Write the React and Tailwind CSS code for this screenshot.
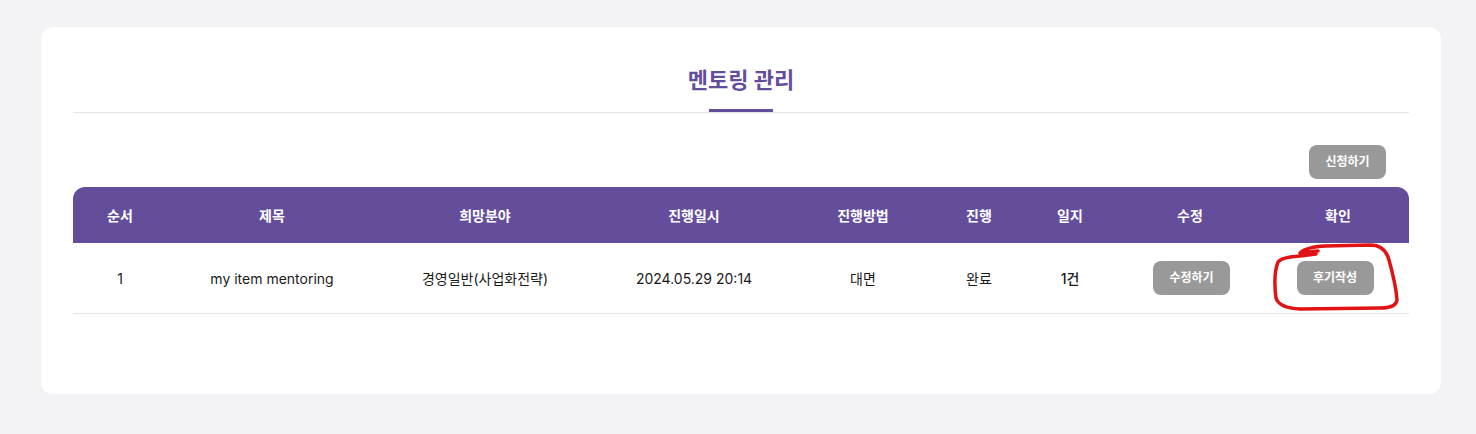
import React from 'react';

const cols = ['순서', '제목', '희망분야', '진행일시', '진행방법', '진행', '일지', '수정', '확인'];

const GrayButton = ({ children }) => (
  <button className="h-[34px] w-[77px] rounded-[8px] bg-[#999999] text-[12px] font-bold text-white">
    {children}
  </button>
);

const App = () => {
  const grid = 'grid grid-cols-[94px_210px_216px_202px_136px_96px_86px_154px_142px]';
  return (
    <div
      className="min-h-[434px] bg-[#f3f3f5] pt-[27px] pb-[39px]"
      style={{ fontFamily: 'Inter, "Noto Sans CJK KR", sans-serif' }}
    >
      <div className="relative ml-[41px] w-[1400px] rounded-[12px] bg-white px-8 pt-[35px] pb-[80px]">
        {/* title */}
        <div className="border-b border-[#e4e4e8] text-center">
          <h2 className="text-[22px] leading-[36px] font-bold text-[#634e9b]">멘토링 관리</h2>
          <div className="mx-auto mt-[11px] h-[3px] w-16 bg-[#634e9b]" />
        </div>

        <div className="mt-8 flex justify-end pr-[23px]">
          <GrayButton>신청하기</GrayButton>
        </div>

        {/* table */}
        <div className="mt-2">
          <div className={`${grid} h-[56px] items-center rounded-t-[12px] bg-[#644e9c] text-[14px] font-bold text-white`}>
            {cols.map((c) => (
              <div key={c} className="text-center">{c}</div>
            ))}
          </div>
          <div className={`${grid} h-[71px] items-center border-b border-[#e2e2e8] text-[14px] text-[#1a1a1a]`}>
            <div className="text-center">1</div>
            <div className="text-center">my item mentoring</div>
            <div className="text-center">경영일반(사업화전략)</div>
            <div className="text-center">2024.05.29 20:14</div>
            <div className="text-center">대면</div>
            <div className="text-center">완료</div>
            <div className="text-center font-medium">1건</div>
            <div className="flex justify-center pl-[3px]"><GrayButton>수정하기</GrayButton></div>
            <div className="flex justify-center pr-[6px]"><GrayButton>후기작성</GrayButton></div>
          </div>
        </div>
      </div>

      {/* hand-drawn annotation */}
      <svg className="pointer-events-none absolute left-0 top-0" width="1476" height="434">
        <path
          d="M1318 251 L1300 253 Q1306 247 1325 246 L1370 245 Q1385 245 1389 260 Q1396 285 1397 300 Q1396 308 1380 308 L1300 309 Q1279 308 1276 298 Q1273 275 1278 262 Q1282 257 1300 256 L1316 254"
          fill="none"
          stroke="#e01414"
          strokeWidth="3.5"
          strokeLinecap="round"
          strokeLinejoin="round"
        />
      </svg>
    </div>
  );
};

export default App;
